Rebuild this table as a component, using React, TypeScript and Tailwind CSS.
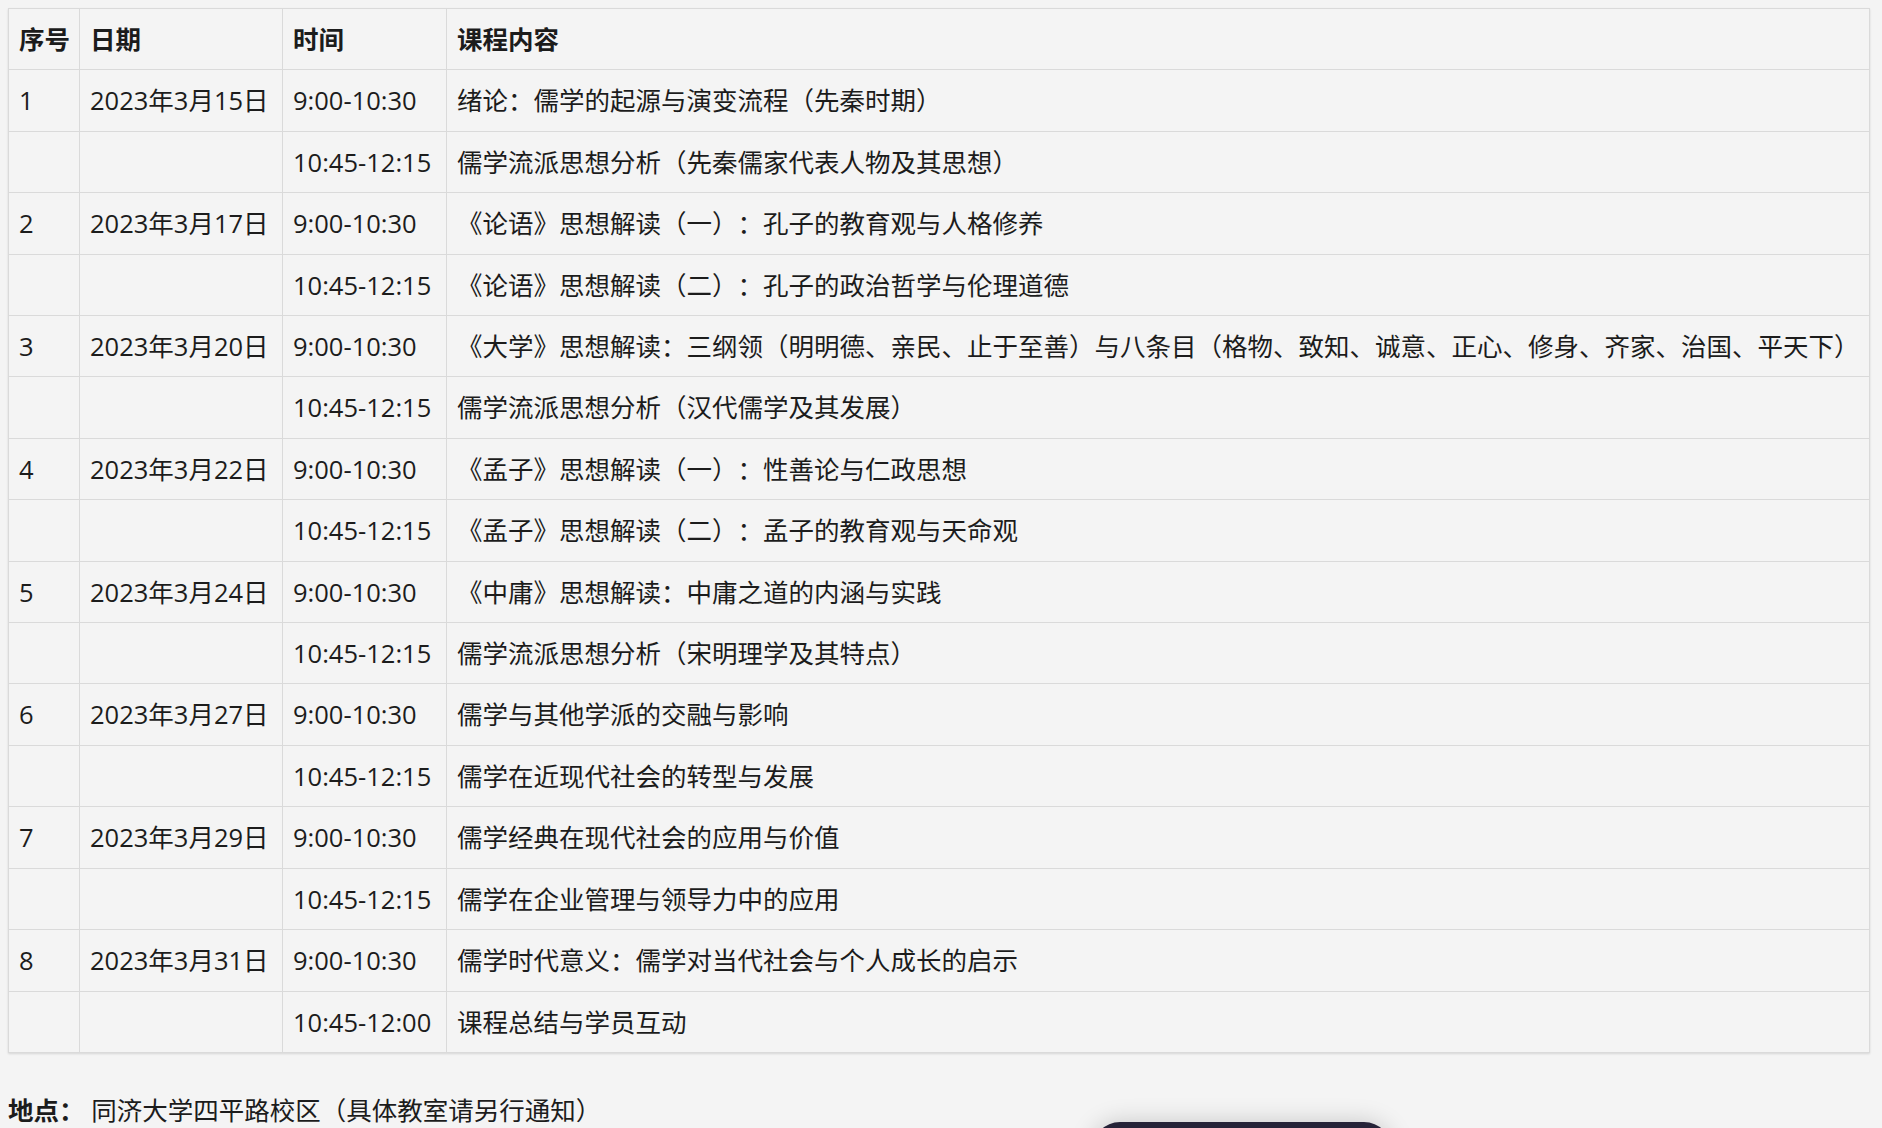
type Lesson = {
    no?: string;
    date?: string;
    time: string;
    content: string;
};

const lessons: Lesson[] = [
    { no: '1', date: '2023年3月15日', time: '9:00-10:30', content: '绪论：儒学的起源与演变流程（先秦时期）' },
    { time: '10:45-12:15', content: '儒学流派思想分析（先秦儒家代表人物及其思想）' },
    { no: '2', date: '2023年3月17日', time: '9:00-10:30', content: '《论语》思想解读（一）：孔子的教育观与人格修养' },
    { time: '10:45-12:15', content: '《论语》思想解读（二）：孔子的政治哲学与伦理道德' },
    {
        no: '3',
        date: '2023年3月20日',
        time: '9:00-10:30',
        content: '《大学》思想解读：三纲领（明明德、亲民、止于至善）与八条目（格物、致知、诚意、正心、修身、齐家、治国、平天下）',
    },
    { time: '10:45-12:15', content: '儒学流派思想分析（汉代儒学及其发展）' },
    { no: '4', date: '2023年3月22日', time: '9:00-10:30', content: '《孟子》思想解读（一）：性善论与仁政思想' },
    { time: '10:45-12:15', content: '《孟子》思想解读（二）：孟子的教育观与天命观' },
    { no: '5', date: '2023年3月24日', time: '9:00-10:30', content: '《中庸》思想解读：中庸之道的内涵与实践' },
    { time: '10:45-12:15', content: '儒学流派思想分析（宋明理学及其特点）' },
    { no: '6', date: '2023年3月27日', time: '9:00-10:30', content: '儒学与其他学派的交融与影响' },
    { time: '10:45-12:15', content: '儒学在近现代社会的转型与发展' },
    { no: '7', date: '2023年3月29日', time: '9:00-10:30', content: '儒学经典在现代社会的应用与价值' },
    { time: '10:45-12:15', content: '儒学在企业管理与领导力中的应用' },
    { no: '8', date: '2023年3月31日', time: '9:00-10:30', content: '儒学时代意义：儒学对当代社会与个人成长的启示' },
    { time: '10:45-12:00', content: '课程总结与学员互动' },
];

const cell = 'border border-[#dadada] px-[10px] py-3 text-left align-top leading-[36.4px] whitespace-nowrap';

export default function App() {
    return (
        <div
            className="relative min-h-[1128px] overflow-hidden bg-[#f4f4f4] pt-2 text-[25.5px] text-[#1c1c1c] [text-spacing-trim:space-all]"
            style={{ fontFamily: '"Open Sans", "Noto Sans CJK SC", sans-serif' }}
        >
            <table className="ml-2 w-[1862px] table-fixed border-collapse shadow-[0_1px_2px_rgba(0,0,0,0.12)]">
                <colgroup>
                    <col className="w-[71px]" />
                    <col className="w-[203px]" />
                    <col className="w-[164px]" />
                    <col />
                </colgroup>
                <thead>
                    <tr>
                        <th className={`${cell} font-bold`}>序号</th>
                        <th className={`${cell} font-bold`}>日期</th>
                        <th className={`${cell} font-bold`}>时间</th>
                        <th className={`${cell} font-bold`}>课程内容</th>
                    </tr>
                </thead>
                <tbody>
                    {lessons.map((lesson, index) => (
                        <tr key={index}>
                            <td className={cell}>{lesson.no ?? ''}</td>
                            <td className={cell}>{lesson.date ?? ''}</td>
                            <td className={cell}>{lesson.time}</td>
                            <td className={cell}>{lesson.content}</td>
                        </tr>
                    ))}
                </tbody>
            </table>

            <p className="ml-2 mt-[39px] leading-[36px]">
                <span className="font-bold">地点：</span> 同济大学四平路校区（具体教室请另行通知）
            </p>

            {/* floating toolbar, mostly below the fold */}
            <div className="fixed left-[1092px] top-[1122px] h-[60px] w-[300px] rounded-[28px] bg-[#262338] shadow-[0_0_24px_rgba(0,0,0,0.18)]" />
        </div>
    );
}
